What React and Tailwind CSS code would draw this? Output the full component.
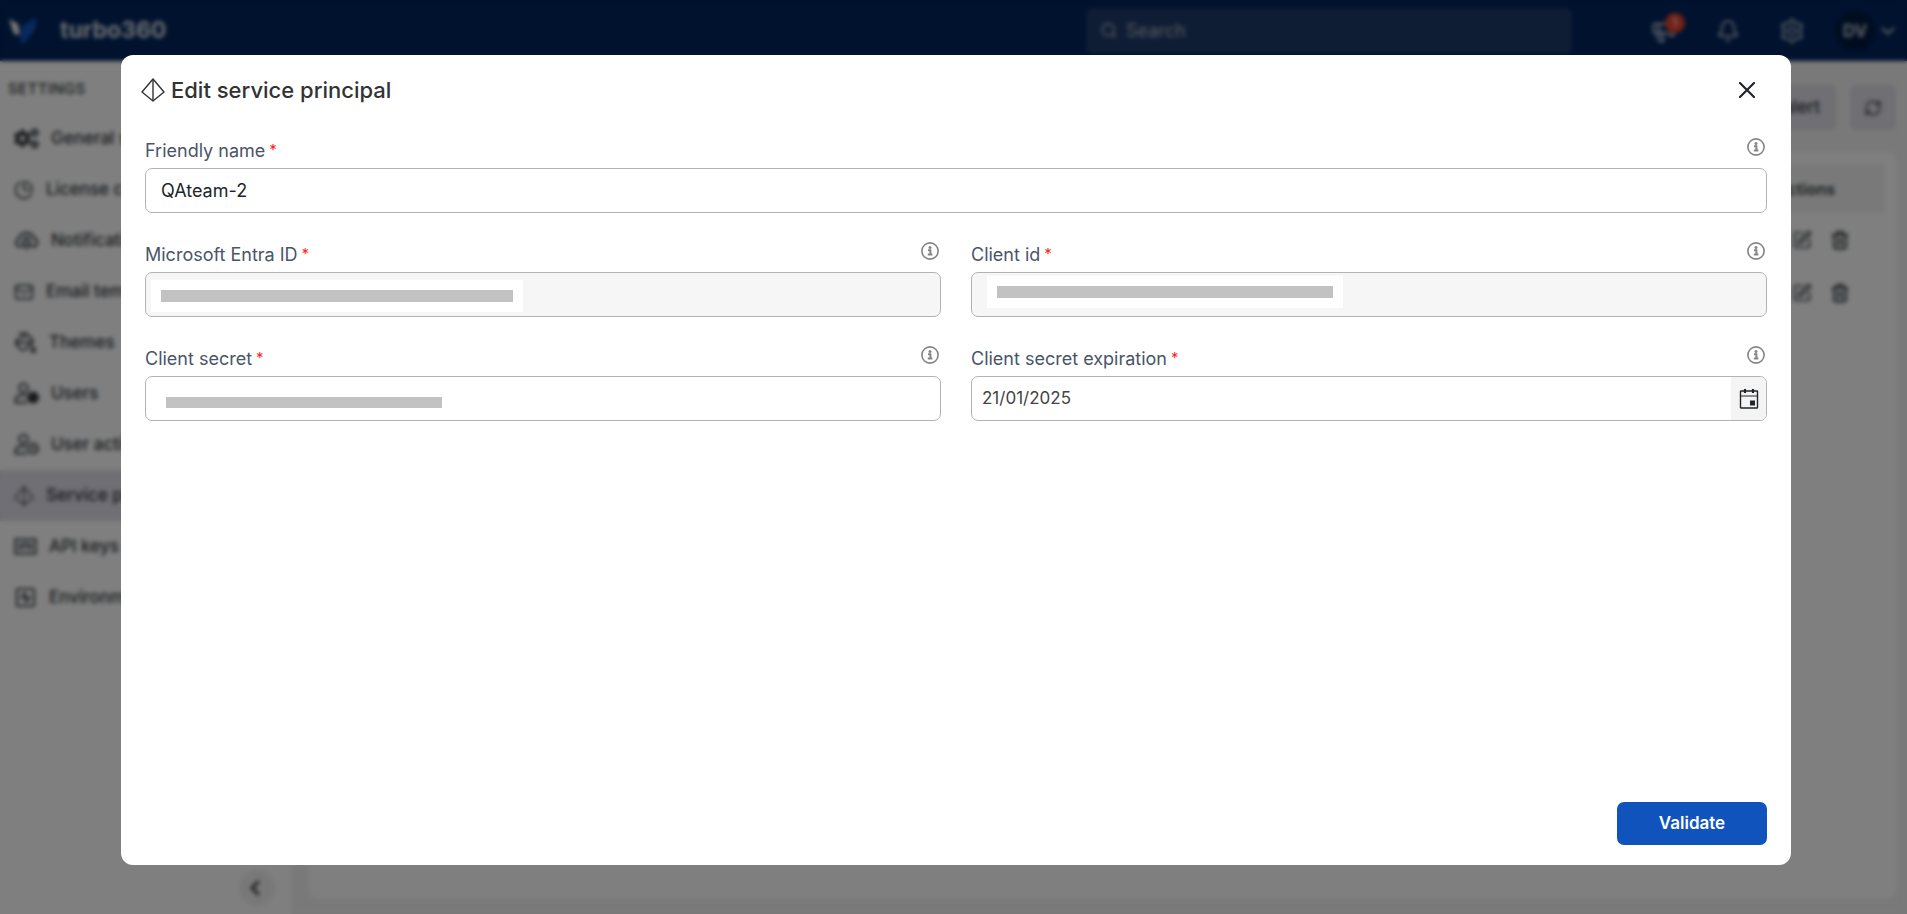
import React, { useState } from 'react';
import { BellIcon, ChevronDown, ChevronLeft, ChartPie, Mail, Megaphone, PaintBucket, RefreshCw, Search, SquareActivity, SquarePen, Trash2 } from 'lucide-react';
import { FaCogs } from 'react-icons/fa';

function PrismIcon({ className }) {
  return (
    <svg viewBox="0 0 24 24" fill="none" stroke="currentColor" strokeWidth="1.4" strokeLinejoin="round" className={className}>
      <path d="M12 1 L23 14 L12 23 L1 14 Z" />
      <path d="M12 1 V23" />
    </svg>
  );
}

function CloudBellIcon({ className }) {
  return (
    <svg viewBox="0 0 24 24" fill="none" stroke="currentColor" strokeWidth="2" strokeLinejoin="round" className={className}>
      <path d="M7 18 H5 A4 4 0 0 1 4.5 10.5 A7.5 7 0 0 1 19 9.5 A4.4 4.4 0 0 1 19 18 H17" />
      <path d="M8 17 L9.5 14 V12 A2.5 2.5 0 0 1 14.5 12 V14 L16 17 Z M11 20 H13" />
    </svg>
  );
}

function UserBadgeIcon({ className, filled }) {
  return (
    <svg viewBox="0 0 25 25" fill="none" stroke="currentColor" strokeWidth="2" className={className}>
      <circle cx="9.5" cy="7" r="4.3" />
      <path d="M13 21.5 H1.5 V19 A5 5 0 0 1 6 14.5 H12" />
      <circle cx="19" cy="16.5" r="5" fill={filled ? 'currentColor' : 'none'} />
      <path d="M19 14 V17 H21" />
    </svg>
  );
}

function UsersIcon({ className }) {
  return <UserBadgeIcon className={className} filled />;
}

function ApiIcon({ className }) {
  return (
    <svg viewBox="0 0 24 24" fill="none" stroke="currentColor" strokeWidth="2" className={className}>
      <rect x="1.5" y="4.5" width="21" height="15" />
      <path d="M6 8.5 V15.5 M18 8.5 V15.5 M9.5 15.5 V9 H14.5 V15.5" />
    </svg>
  );
}

function InfoIcon() {
  return (
    <svg viewBox="0 0 18 18" className="w-[18px] h-[18px] text-[#858585]" fill="none">
      <circle cx="9" cy="9" r="8.1" stroke="currentColor" strokeWidth="1.6" />
      <circle cx="9" cy="5.4" r="1.5" fill="currentColor" />
      <path d="M7 8.2 H9.4 V12.4 M6.8 12.6 H11.4" stroke="currentColor" strokeWidth="2" />
    </svg>
  );
}

function CalendarIcon() {
  return (
    <svg viewBox="0 0 20 20" className="w-5 h-5 text-[#212529]" fill="none">
      <rect x="1.5" y="2" width="17" height="17" rx="0.5" stroke="currentColor" strokeWidth="1.4" />
      <path d="M1.5 7 H18.5" stroke="currentColor" strokeWidth="1.2" />
      <path d="M6 0 V4 M14 0 V4" stroke="currentColor" strokeWidth="2.2" />
      <rect x="11" y="11.5" width="5" height="5" fill="currentColor" />
    </svg>
  );
}

function HexGear() {
  return (
    <svg viewBox="0 0 24 24" className="w-6 h-[26px]" fill="none" stroke="currentColor" strokeWidth="2.2" strokeLinejoin="round">
      <path d="M12 0.5 L15 3.5 L21.5 5.5 L20.5 12 L21.5 18.5 L15 20.5 L12 23.5 L9 20.5 L2.5 18.5 L3.5 12 L2.5 5.5 L9 3.5 Z" />
      <circle cx="12" cy="12" r="4" />
    </svg>
  );
}

const menu = [
  { label: 'General settings', Icon: FaCogs, size: 'w-[25px] h-[25px]' },
  { label: 'License consumption', Icon: ChartPie, size: 'w-5 h-5' },
  { label: 'Notification channels', Icon: CloudBellIcon, size: 'w-[25px] h-[25px]' },
  { label: 'Email templates', Icon: Mail, size: 'w-5 h-5' },
  { label: 'Themes', Icon: PaintBucket, size: 'w-[23px] h-[23px]' },
  { label: 'Users', Icon: UsersIcon, size: 'w-[25px] h-[25px]' },
  { label: 'User activities', Icon: UserBadgeIcon, size: 'w-[25px] h-[25px]' },
  { label: 'Service principals', Icon: PrismIcon, size: 'w-5 h-5', active: true },
  { label: 'API keys', Icon: ApiIcon, size: 'w-[23px] h-[23px]' },
  { label: 'Environments', Icon: SquareActivity, size: 'w-[23px] h-[23px]' },
];

const inputCls = 'block w-full h-[45px] rounded-[7px] border border-[#b3b3b3] outline-none text-[18px] text-[#212529] focus:border-[#1053bd]';

function Field({ id, label, className = '', children }) {
  return (
    <div className={className}>
      <div className="flex justify-between items-start h-[30px]">
        <label htmlFor={id} className="flex gap-1 text-[18px] leading-[26px] text-[#4a5568]">
          {label}<span className="text-[#ff1f1f] text-[15px] leading-6">*</span>
        </label>
        <button type="button" aria-label={`About ${label}`} className="mr-[2px]"><InfoIcon /></button>
      </div>
      <div className="relative">{children}</div>
    </div>
  );
}

function TopBar() {
  return (
    <header className="flex items-center h-[61px] px-2 bg-[#00245c] text-[#b4bccb]">
      <svg viewBox="0 0 30 28" className="w-[30px] h-7" aria-hidden="true">
        <path d="M1 2 L10 7 L12 18 L6 17 Z" fill="#f4f4f4" />
        <path d="M29 0 L27 12 L16 27 L12 24 L14 9 Z" fill="#1053bd" />
      </svg>
      <span className="ml-[22px] text-[23px] font-bold text-[#d5dae2]">turbo360</span>
      <label className="flex items-center gap-2 ml-auto w-[486px] h-[46px] rounded-md px-[14px] bg-[#1e3a69]">
        <Search className="w-[19px] h-[19px]" />
        <input type="search" placeholder="Search" className="bg-transparent outline-none text-[18px] w-full placeholder:text-[#a8b1c0]" />
      </label>
      <div className="flex items-center ml-[78px]">
        <button type="button" aria-label="Announcements" className="relative mr-[39px]">
          <Megaphone className="w-[27px] h-[27px]" />
          <span className="absolute -top-1 -right-2 w-5 h-5 rounded-full bg-[#e5432f] text-white text-[12px] leading-5">1</span>
        </button>
        <button type="button" aria-label="Notifications" className="mr-[40px]"><BellIcon className="w-6 h-6" /></button>
        <button type="button" aria-label="Settings" className="mr-[31px]"><HexGear /></button>
        <button type="button" className="flex items-center gap-[2px]">
          <span className="w-10 h-10 rounded-full bg-[#001a40] text-[17px] leading-10 font-bold">DV</span>
          <ChevronDown className="w-[22px] h-[22px]" strokeWidth={2.5} />
        </button>
      </div>
    </header>
  );
}

function Sidebar() {
  return (
    <nav className="relative w-[291px] shrink-0 bg-white text-[#33383d]">
      <h2 className="h-[52px] pl-2 text-[15px] leading-[56px] font-medium tracking-wide">SETTINGS</h2>
      {menu.map(({ label, Icon, size, active }) => (
        <a key={label} href="#" className={`flex items-center gap-3 h-[51px] pl-[14px] text-[17px] font-medium ${active ? 'bg-[#dfdee9]' : ''}`}>
          <Icon className={size} />
          {label}
        </a>
      ))}
      <button type="button" aria-label="Collapse menu" className="absolute right-4 bottom-2 w-9 h-9 rounded-full bg-[#f1f1f1] flex items-center justify-center">
        <ChevronLeft className="w-6 h-6 mr-1" strokeWidth={3} />
      </button>
    </nav>
  );
}

function Content() {
  return (
    <main className="flex-1 flex flex-col bg-[#f3f3f3] pt-6 pl-[18px] pr-[11px] pb-4 text-[#33383d]">
      <div className="flex justify-end gap-[14px] mb-[23px]">
        <button type="button" className="h-[45px] px-4 rounded-md bg-[#dfdee9] text-[17px] font-medium">Set alert</button>
        <button type="button" aria-label="Refresh" className="w-[46px] h-[45px] rounded-md bg-[#dfdee9] flex items-center justify-center">
          <RefreshCw className="w-[18px] h-[18px]" />
        </button>
      </div>
      <div className="flex-1 bg-white rounded-lg p-[11px]">
        <table className="w-full">
          <thead>
            <tr className="h-[49px] bg-[#f3f3f3]">
              <th className="text-right pr-[50px] text-[16px] font-semibold">Actions</th>
            </tr>
          </thead>
          <tbody>
            {[1, 2].map((row) => (
              <tr key={row} className="h-[53px]">
                <td>
                  <div className="flex justify-end gap-[18px] pr-[35px]">
                    <button type="button" aria-label="Edit"><SquarePen className="w-5 h-5" /></button>
                    <button type="button" aria-label="Delete"><Trash2 className="w-5 h-5" strokeWidth={2.5} /></button>
                  </div>
                </td>
              </tr>
            ))}
          </tbody>
        </table>
      </div>
    </main>
  );
}

function EditModal() {
  const [name, setName] = useState('QAteam-2');
  const [expiry, setExpiry] = useState('21/01/2025');

  return (
    <div className="fixed inset-0 flex bg-black/50 backdrop-blur-[2px] pt-[55px] pr-[116px] pb-[49px] pl-[121px]">
      <form role="dialog" aria-labelledby="dialog-title" onSubmit={(e) => e.preventDefault()} className="flex-1 flex flex-col bg-white rounded-xl px-6 pb-5">
        {/* Header */}
        <div className="flex items-center h-[70px] -ml-1">
          <PrismIcon className="w-6 h-6 text-[#333]" />
          <h1 id="dialog-title" className="ml-[6px] text-[22px] font-medium text-[#333]">Edit service principal</h1>
          <button type="button" aria-label="Close" className="ml-auto mr-3">
            <svg viewBox="0 0 16 16" className="w-4 h-4" stroke="#212529" strokeWidth="2.2" strokeLinecap="round">
              <path d="M1 1 L15 15 M15 1 L1 15" />
            </svg>
          </button>
        </div>

        {/* Fields */}
        <div className="grid grid-cols-2 gap-x-[30px] gap-y-[29px] pt-[13px]">
          <Field id="name" label="Friendly name" className="col-span-2">
            <input id="name" className={`${inputCls} px-[15px]`} value={name} onChange={(e) => setName(e.target.value)} />
          </Field>
          <Field id="entra" label="Microsoft Entra ID">
            <input id="entra" disabled className={`${inputCls} bg-[#f6f6f6]`} />
            <span className="absolute left-[6px] top-2 w-[372px] h-8 bg-white p-[10px]"><span className="block h-3 bg-[#c2c2c2]" /></span>
          </Field>
          <Field id="client" label="Client id">
            <input id="client" disabled className={`${inputCls} bg-[#f6f6f6]`} />
            <span className="absolute left-4 top-1 w-[356px] h-8 bg-white p-[10px]"><span className="block h-3 bg-[#c2c2c2]" /></span>
          </Field>
          <Field id="secret" label="Client secret">
            <input id="secret" type="password" className={inputCls} />
            <span className="absolute left-[21px] top-[21px] w-[276px] h-[11px] bg-[#c2c2c2]" />
          </Field>
          <Field id="expiry" label="Client secret expiration">
            <div className="flex h-[45px] rounded-[7px] border border-[#b3b3b3] overflow-hidden">
              <input id="expiry" className="flex-1 px-[10px] outline-none text-[17px] text-[#444]" value={expiry} onChange={(e) => setExpiry(e.target.value)} />
              <button type="button" aria-label="Pick a date" className="w-[35px] bg-[#f4f4f4] flex items-center justify-center"><CalendarIcon /></button>
            </div>
          </Field>
        </div>

        <button type="submit" className="mt-auto self-end w-[150px] h-[43px] rounded-[7px] bg-[#1053bd] text-white text-[17px] font-semibold">Validate</button>
      </form>
    </div>
  );
}

export default function App() {
  return (
    <div className="min-h-screen flex flex-col font-['Inter',sans-serif]">
      <TopBar />
      <div className="flex-1 flex">
        <Sidebar />
        <Content />
      </div>
      <EditModal />
    </div>
  );
}
